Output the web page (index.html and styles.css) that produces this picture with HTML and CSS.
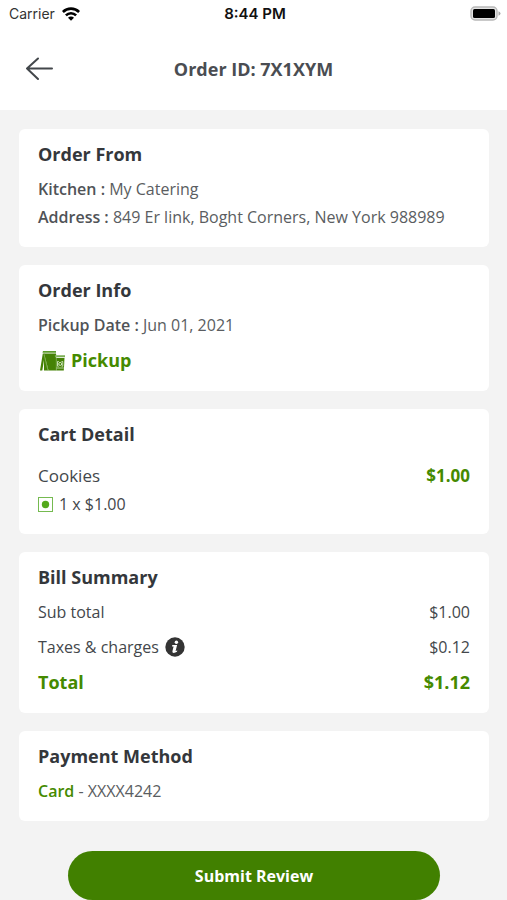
FILE: index.html
```
<!DOCTYPE html>
<html lang="en">
<head>
<meta charset="utf-8">
<meta name="viewport" content="width=device-width, initial-scale=1">
<title>Order ID: 7X1XYM</title>
<link rel="stylesheet" href="styles.css">
</head>
<body>
<div class="status">
  <div class="carrier">
    <span>Carrier</span>
    <svg width="18" height="14" viewBox="0 0 18 14" fill="none" stroke="#000" stroke-width="2.6" aria-hidden="true">
      <path d="M.9 5a11.500 11.500 0 0 1 16.200 0"/>
      <path d="M3.900 8.400a7.200 7.200 0 0 1 10.200 0"/>
      <path d="M9 13.700 6 10.700a4.200 4.200 0 0 1 6 0z" fill="#000" stroke="none"/>
    </svg>
  </div>
  <div class="clock">8:44 PM</div>
  <svg class="battery" width="31" height="15" viewBox="0 0 31 15" aria-hidden="true">
    <rect x="1" y="1" width="26" height="13" rx="4" fill="#e4e4e4" stroke="#b8b8b8" stroke-width="1.4"/>
    <rect x="3" y="3" width="22" height="9" rx="1.500" fill="#000"/>
    <path d="M28.500 5.300q2 .8 2 2.200t-2 2.200z" fill="#a8a8a8"/>
  </svg>
</div>
<header class="topbar">
  <button class="back" type="button" aria-label="Back">
    <svg width="28" height="24" viewBox="0 0 28 24" fill="none" stroke="#43474b" stroke-width="2" stroke-linecap="round" stroke-linejoin="round" aria-hidden="true">
      <path d="M26 11.500H1M12 1.500 1 11.500l11 10.500"/>
    </svg>
  </button>
  <h1>Order ID: 7X1XYM</h1>
</header>
<main>
  <section class="card">
    <h2>Order From</h2>
    <p><b>Kitchen :</b> My Catering</p>
    <p><b>Address :</b> 849 Er link, Boght Corners, New York 988989</p>
  </section>

  <section class="card spaced">
    <h2>Order Info</h2>
    <p><b>Pickup Date :</b> Jun 01, 2021</p>
    <p class="strong pickup">
      <svg width="25" height="20" viewBox="0 0 25 20" aria-hidden="true">
        <path d="M3 0h13v1.700H2.500z" fill="#5c9c2a"/>
        <path d="M4 2.400h12v17.100H8.500z" fill="#458205"/>
        <path d="M2.800 2.400 0 19.500h2.300L4 9v10.500h4.500L4.300 2.400z" fill="#458205"/>
        <path d="M4 3.500 8 19.500" stroke="#9cc67b" stroke-width=".6"/>
        <path d="M14.800 4.200H25v2H15z" fill="#7bae54"/>
        <path d="M15.500 7h9l-.7 12.500h-7.600z" fill="#458205"/>
        <path d="M16.200 17h7.600" stroke="#d3e6c4" stroke-width=".8"/>
        <path d="M16.300 3.500v16" stroke="#9cc67b" stroke-width=".6"/>
        <path d="M18.800 10.500h-1.300v4.700h1.300M21.500 10.500h1.300v4.700h-1.300" fill="none" stroke="#d3e6c4" stroke-width=".9"/>
        <circle cx="20.200" cy="12.900" r="1.500" fill="none" stroke="#e3f0d8" stroke-width=".9"/>
      </svg>
      <span>Pickup</span>
    </p>
  </section>

  <section class="card cart">
    <h2>Cart Detail</h2>
    <div class="line item"><span>Cookies</span><span class="price">$1.00</span></div>
    <p class="qty">
      <svg width="15" height="15" viewBox="0 0 15 15" aria-hidden="true">
        <rect x=".5" y=".5" width="14" height="14" fill="#fff" stroke="#75ba50"/>
        <circle cx="7.500" cy="7.500" r="3.700" fill="#54a91c"/>
      </svg>
      <span>1 x $1.00</span>
    </p>
  </section>

  <section class="card spaced">
    <h2>Bill Summary</h2>
    <div class="line"><span>Sub total</span><span>$1.00</span></div>
    <div class="line">
      <span class="tax">Taxes &amp; charges
        <button class="info" type="button" aria-label="About taxes and charges">
          <svg width="20" height="20" viewBox="0 0 20 20" aria-hidden="true">
            <circle cx="10" cy="10" r="9.700" fill="#343434"/>
            <circle cx="11.400" cy="5.200" r="1.700" fill="#fff"/>
            <path d="M7.300 8.100h4.800l-1.500 6 1.700-.5-.3 1.200q-1.700 1.100-3.300 1.100-1.600-.1-1.300-1.700l1.200-4.700H7z" fill="#fff"/>
          </svg>
        </button>
      </span>
      <span>$0.12</span>
    </div>
    <div class="line strong"><span>Total</span><span>$1.12</span></div>
  </section>

  <section class="card">
    <h2>Payment Method</h2>
    <p><b class="method">Card</b> - XXXX4242</p>
  </section>

  <button class="submit" type="button">Submit Review</button>
</main>
</body>
</html>
```
FILE: styles.css
```
* {
  box-sizing: border-box;
}

body {
  margin: 0;
  background: #f3f3f3;
  color: #43474b;
  font: 16px/28px "Open Sans", "Noto Sans", sans-serif;
}

h1, h2, p {
  margin: 0;
}

button {
  border: 0;
  padding: 0;
  background: none;
  font: inherit;
  cursor: pointer;
}

svg {
  display: block;
  flex: none;
}

.status {
  display: grid;
  grid-template-columns: 1fr auto 1fr;
  align-items: center;
  height: 27px;
  padding: 0 6px 0 9px;
  background: #fff;
  color: #111;
  font: 14px/27px Inter, "Liberation Sans", sans-serif;
}

.carrier {
  display: flex;
  align-items: center;
  gap: 7px;
  color: #333;
}

.clock {
  font-size: 15px;
  font-weight: 600;
}

.battery {
  justify-self: end;
}

.topbar {
  display: grid;
  grid-template-columns: 1fr auto 1fr;
  align-items: center;
  height: 83px;
  padding: 0 26px;
  background: #fff;
}

.back {
  justify-self: start;
}

h1 {
  color: #4a4d52;
  font-size: 18px;
  font-weight: 700;
  line-height: 26px;
}

main {
  display: flex;
  flex-direction: column;
  gap: 18px;
  padding: 19px 18px 0 19px;
}

.card {
  padding: 12px 19px 16px;
  border-radius: 6px;
  background: #fff;
}

h2 {
  margin-bottom: 8px;
  color: #34373b;
  font-size: 18px;
  font-weight: 700;
  line-height: 26px;
}

p {
  color: #5a5d61;
}

b {
  color: #505357;
  font-weight: 600;
}

.spaced > * + * + * {
  margin-top: 7px;
}

.line {
  display: flex;
  justify-content: space-between;
  font-weight: 500;
}

.strong {
  color: #458a00;
  font-size: 18px;
  font-weight: 700;
  line-height: 29px;
}

.pickup {
  display: flex;
  align-items: center;
  gap: 6px;
  padding-left: 2px;
}

.cart h2 {
  margin-bottom: 15px;
}

.item {
  font-size: 17px;
}

.price {
  color: #458a00;
  font-weight: 700;
}

.qty {
  display: flex;
  align-items: center;
  gap: 6px;
  color: #43474b;
}

.tax {
  display: flex;
  align-items: center;
  gap: 6px;
}

.method {
  color: #458a00;
}

.submit {
  align-self: center;
  width: 79%;
  height: 49px;
  margin-top: 12px;
  border-radius: 25px;
  background: #418000;
  color: #fff;
  font-weight: 700;
}
```
